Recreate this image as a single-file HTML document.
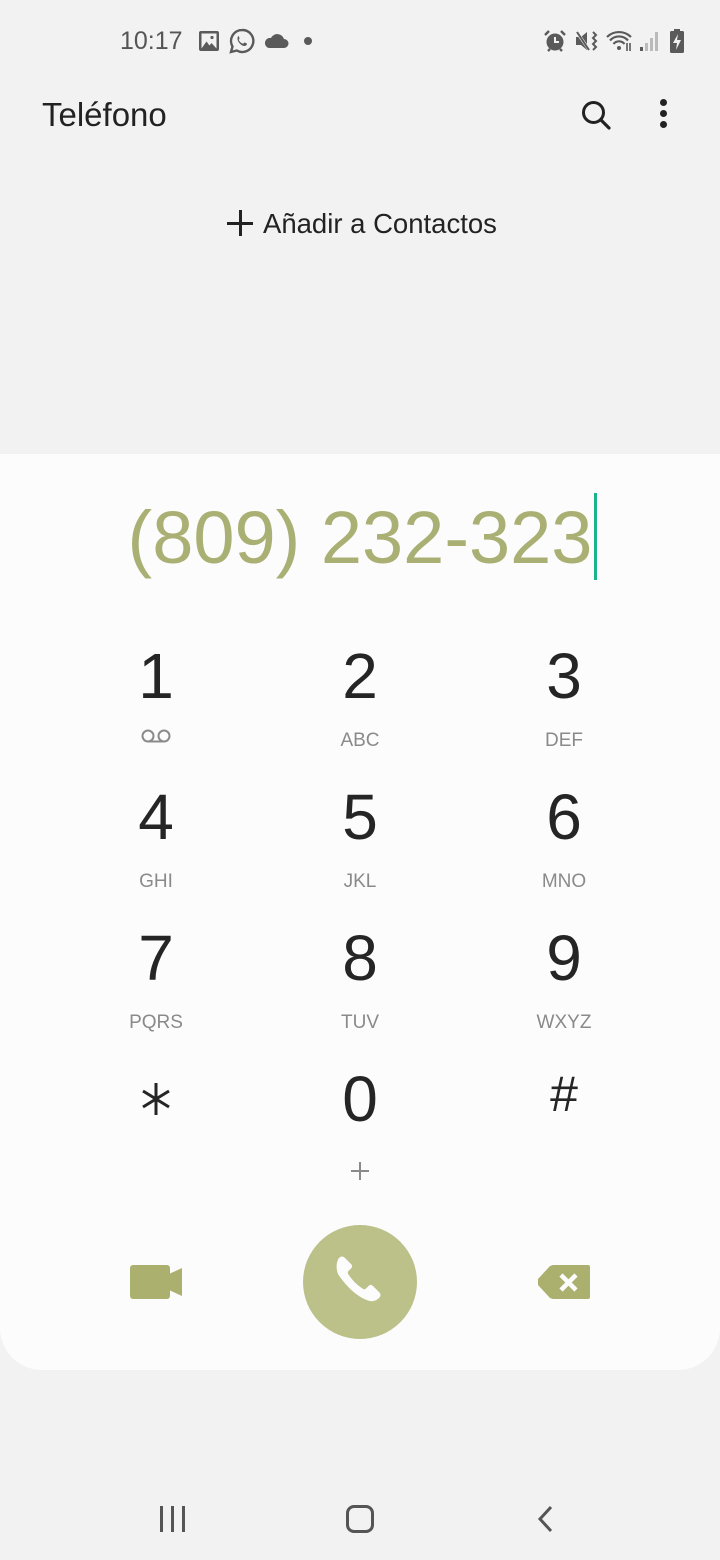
<!DOCTYPE html>
<html><head><meta charset="utf-8"><style>
*{margin:0;padding:0;box-sizing:border-box}
body{width:720px;height:1560px;background:#f2f2f2;font-family:"Liberation Sans",sans-serif;position:relative;overflow:hidden;color:#222}
.a{position:absolute}
.panel{position:absolute;left:0;top:454px;width:720px;height:916px;background:#fcfcfc;border-radius:0 0 42px 42px}
.d{position:absolute;width:200px;text-align:center;font-size:64px;line-height:64px;color:#252525}
.l{position:absolute;width:200px;text-align:center;font-size:19px;line-height:19px;color:#8a8a8a}
</style></head><body>
<div class="a" style="left:120px;top:27px;font-size:25px;line-height:28px;color:#555">10:17</div>
<svg class="a" style="left:198px;top:30px" width="22" height="22" viewBox="0 0 22 22"><rect x="1" y="1" width="20" height="20" rx="2" fill="#5a5a5a"/><rect x="3.5" y="3.5" width="15" height="15" fill="#f2f2f2"/><path d="M3.5 18.5l5-7 3 4 2-2.5 5 5.5z" fill="#5a5a5a"/><circle cx="14" cy="7.5" r="1.6" fill="#5a5a5a"/></svg>
<svg class="a" style="left:229px;top:28px" width="26" height="26" viewBox="0 0 26 26"><path d="M13 2a11 11 0 0 0-9.5 16.5L2 24l5.8-1.5A11 11 0 1 0 13 2z" fill="none" stroke="#5a5a5a" stroke-width="2.4"/><path d="M9 8c1 0 1.5 2 1.5 2.5S9.5 11.5 10 12.5s2 2.5 3.5 3 1.5-1 2-1 2.5 1 2.5 1.5c0 1-1.5 2-2.5 2-3 0-7-4-7-7 0-1 .5-3 .5-3z" fill="#5a5a5a"/></svg>
<svg class="a" style="left:263px;top:33px" width="26" height="16" viewBox="0 0 26 16"><path d="M6 15h15a4.5 4.5 0 0 0 0-9 7 7 0 0 0-13-1A5 5 0 0 0 6 15z" fill="#5a5a5a"/></svg>
<div class="a" style="left:304px;top:37px;width:8px;height:8px;border-radius:50%;background:#5a5a5a"></div>
<svg class="a" style="left:542px;top:28px" width="26" height="26" viewBox="0 0 26 26"><circle cx="13" cy="14" r="8.5" fill="#5a5a5a"/><path d="M13 9v5h4" stroke="#f2f2f2" stroke-width="2" fill="none"/><path d="M3 7l4-4M23 7l-4-4M6 23l2-2M20 23l-2-2" stroke="#5a5a5a" stroke-width="2.4"/></svg>
<svg class="a" style="left:574px;top:29px" width="26" height="24" viewBox="0 0 26 24"><path d="M2 8h5l6-5v18l-6-5H2z" fill="#5a5a5a"/><path d="M2 2l14 20" stroke="#f2f2f2" stroke-width="3"/><path d="M3 3l12 18" stroke="#5a5a5a" stroke-width="2"/><path d="M19 3l3 3-3 3 3 3-3 3 3 3-3 3" stroke="#5a5a5a" stroke-width="2" fill="none"/></svg>
<svg class="a" style="left:605px;top:29px" width="30" height="24" viewBox="0 0 30 24"><path d="M2 8a17 17 0 0 1 24 0M5 11.5a12 12 0 0 1 18 0M8.5 15a7 7 0 0 1 11 0" stroke="#5a5a5a" stroke-width="2.2" fill="none"/><circle cx="14" cy="19" r="2" fill="#5a5a5a"/><path d="M22 14v8M25 14v8" stroke="#5a5a5a" stroke-width="1.6"/></svg>
<svg class="a" style="left:638px;top:30px" width="22" height="22" viewBox="0 0 22 22"><rect x="2" y="17" width="3" height="4" fill="#5a5a5a"/><rect x="7" y="13" width="3" height="8" fill="#bbb"/><rect x="12" y="8" width="3" height="13" fill="#bbb"/><rect x="17" y="2" width="3" height="19" fill="#bbb"/></svg>
<svg class="a" style="left:668px;top:28px" width="18" height="26" viewBox="0 0 18 26"><rect x="6" y="1" width="6" height="3" fill="#5a5a5a"/><rect x="2" y="3" width="14" height="22" rx="1.5" fill="#5a5a5a"/><path d="M10 6l-5 9h4l-1 7 5-10H9z" fill="#f2f2f2"/></svg>

<div class="a" style="left:42px;top:96px;font-size:33px;line-height:38px;color:#222">Teléfono</div>
<svg class="a" style="left:579px;top:98px" width="34" height="34" viewBox="0 0 34 34"><circle cx="14.5" cy="14.5" r="10" fill="none" stroke="#222" stroke-width="3"/><path d="M22 22l8 8" stroke="#222" stroke-width="3.2" stroke-linecap="round"/></svg>
<div class="a" style="left:660px;top:99px;width:7px;height:7px;border-radius:50%;background:#222;box-shadow:0 11px 0 #222,0 22px 0 #222"></div>
<div class="a" style="left:227px;top:222px;width:26px;height:3px;background:#222"></div>
<div class="a" style="left:238.5px;top:210px;width:3px;height:26px;background:#222"></div>
<div class="a" style="left:263px;top:206px;font-size:27.5px;line-height:36px;color:#222">Añadir a Contactos</div>

<div class="panel"></div>
<div class="a" style="left:0;width:720px;top:493px;text-align:center;font-size:74px;line-height:90px;color:#aab073">(809) 232-323</div>
<div class="a" style="left:594px;top:493px;width:3px;height:87px;background:#1bb38c"></div>

<div class="d" style="left:56px;top:644px">1</div><div class="d" style="left:260px;top:644px">2</div><div class="d" style="left:464px;top:644px">3</div>
<svg class="a" style="left:140px;top:729px" width="32" height="16" viewBox="0 0 32 16"><circle cx="8" cy="7" r="5.5" fill="none" stroke="#8a8a8a" stroke-width="2"/><circle cx="24" cy="7" r="5.5" fill="none" stroke="#8a8a8a" stroke-width="2"/><path d="M8 12.5h16" stroke="#8a8a8a" stroke-width="2"/></svg>
<div class="l" style="left:260px;top:731px">ABC</div><div class="l" style="left:464px;top:731px">DEF</div>
<div class="d" style="left:56px;top:785px">4</div><div class="d" style="left:260px;top:785px">5</div><div class="d" style="left:464px;top:785px">6</div>
<div class="l" style="left:56px;top:872px">GHI</div><div class="l" style="left:260px;top:872px">JKL</div><div class="l" style="left:464px;top:872px">MNO</div>
<div class="d" style="left:56px;top:926px">7</div><div class="d" style="left:260px;top:926px">8</div><div class="d" style="left:464px;top:926px">9</div>
<div class="l" style="left:56px;top:1013px">PQRS</div><div class="l" style="left:260px;top:1013px">TUV</div><div class="l" style="left:464px;top:1013px">WXYZ</div>
<svg class="a" style="left:140px;top:1081px" width="32" height="36" viewBox="0 0 32 36"><path d="M16 2v32M3 10l26 16M29 10L3 26" stroke="#252525" stroke-width="3" fill="none"/></svg>
<div class="d" style="left:260px;top:1067px">0</div><div class="d" style="left:464px;top:1062px;font-size:50px">#</div>
<div class="a" style="left:350px;top:1161px;width:20px;height:20px"><div class="a" style="left:9px;top:1px;width:2px;height:18px;background:#8a8a8a"></div><div class="a" style="left:1px;top:9px;width:18px;height:2px;background:#8a8a8a"></div></div>

<svg class="a" style="left:129px;top:1264px" width="54" height="36" viewBox="0 0 54 36"><rect x="1" y="1" width="40" height="34" rx="3" fill="#abb06f"/><path d="M40 10l13-6v28l-13-6z" fill="#abb06f"/></svg>
<div class="a" style="left:303px;top:1225px;width:114px;height:114px;border-radius:50%;background:#bcc089"></div>
<svg class="a" style="left:330px;top:1252px" width="60" height="60" viewBox="0 0 60 60"><path d="M9 6c2-2 4-2 6 0l6 6c1.5 1.5 1.5 3 0 4.5l-2.5 2.5c-1 1-1 2 0 3.5 4 6 8 10 14 14 1.5 1 2.5 1 3.5 0l2.5-2.5c1.5-1.5 3-1.5 4.5 0l6 6c2 2 2 4 0 6-3 3-7 4-11 2.5C27 45 15 33 8 22 6 17 6 10 9 6z" fill="#fcfcfc"/></svg>
<svg class="a" style="left:537px;top:1264px" width="54" height="36" viewBox="0 0 54 36"><path d="M16 1h35a2 2 0 0 1 2 2v30a2 2 0 0 1-2 2H16l-3-1L1 21v-6L13 2z" fill="#abb06f"/><path d="M24 11l15 15M39 11L24 26" stroke="#fcfcfc" stroke-width="4.5"/></svg>

<div class="a" style="left:160px;top:1506px;width:3px;height:26px;background:#555;box-shadow:11px 0 0 #555,22px 0 0 #555"></div>
<div class="a" style="left:346px;top:1505px;width:28px;height:28px;border:3px solid #555;border-radius:8px"></div>
<svg class="a" style="left:536px;top:1504px" width="20" height="30" viewBox="0 0 20 30"><path d="M15 3L4 15l11 12" stroke="#555" stroke-width="3" fill="none"/></svg>
</body></html>
